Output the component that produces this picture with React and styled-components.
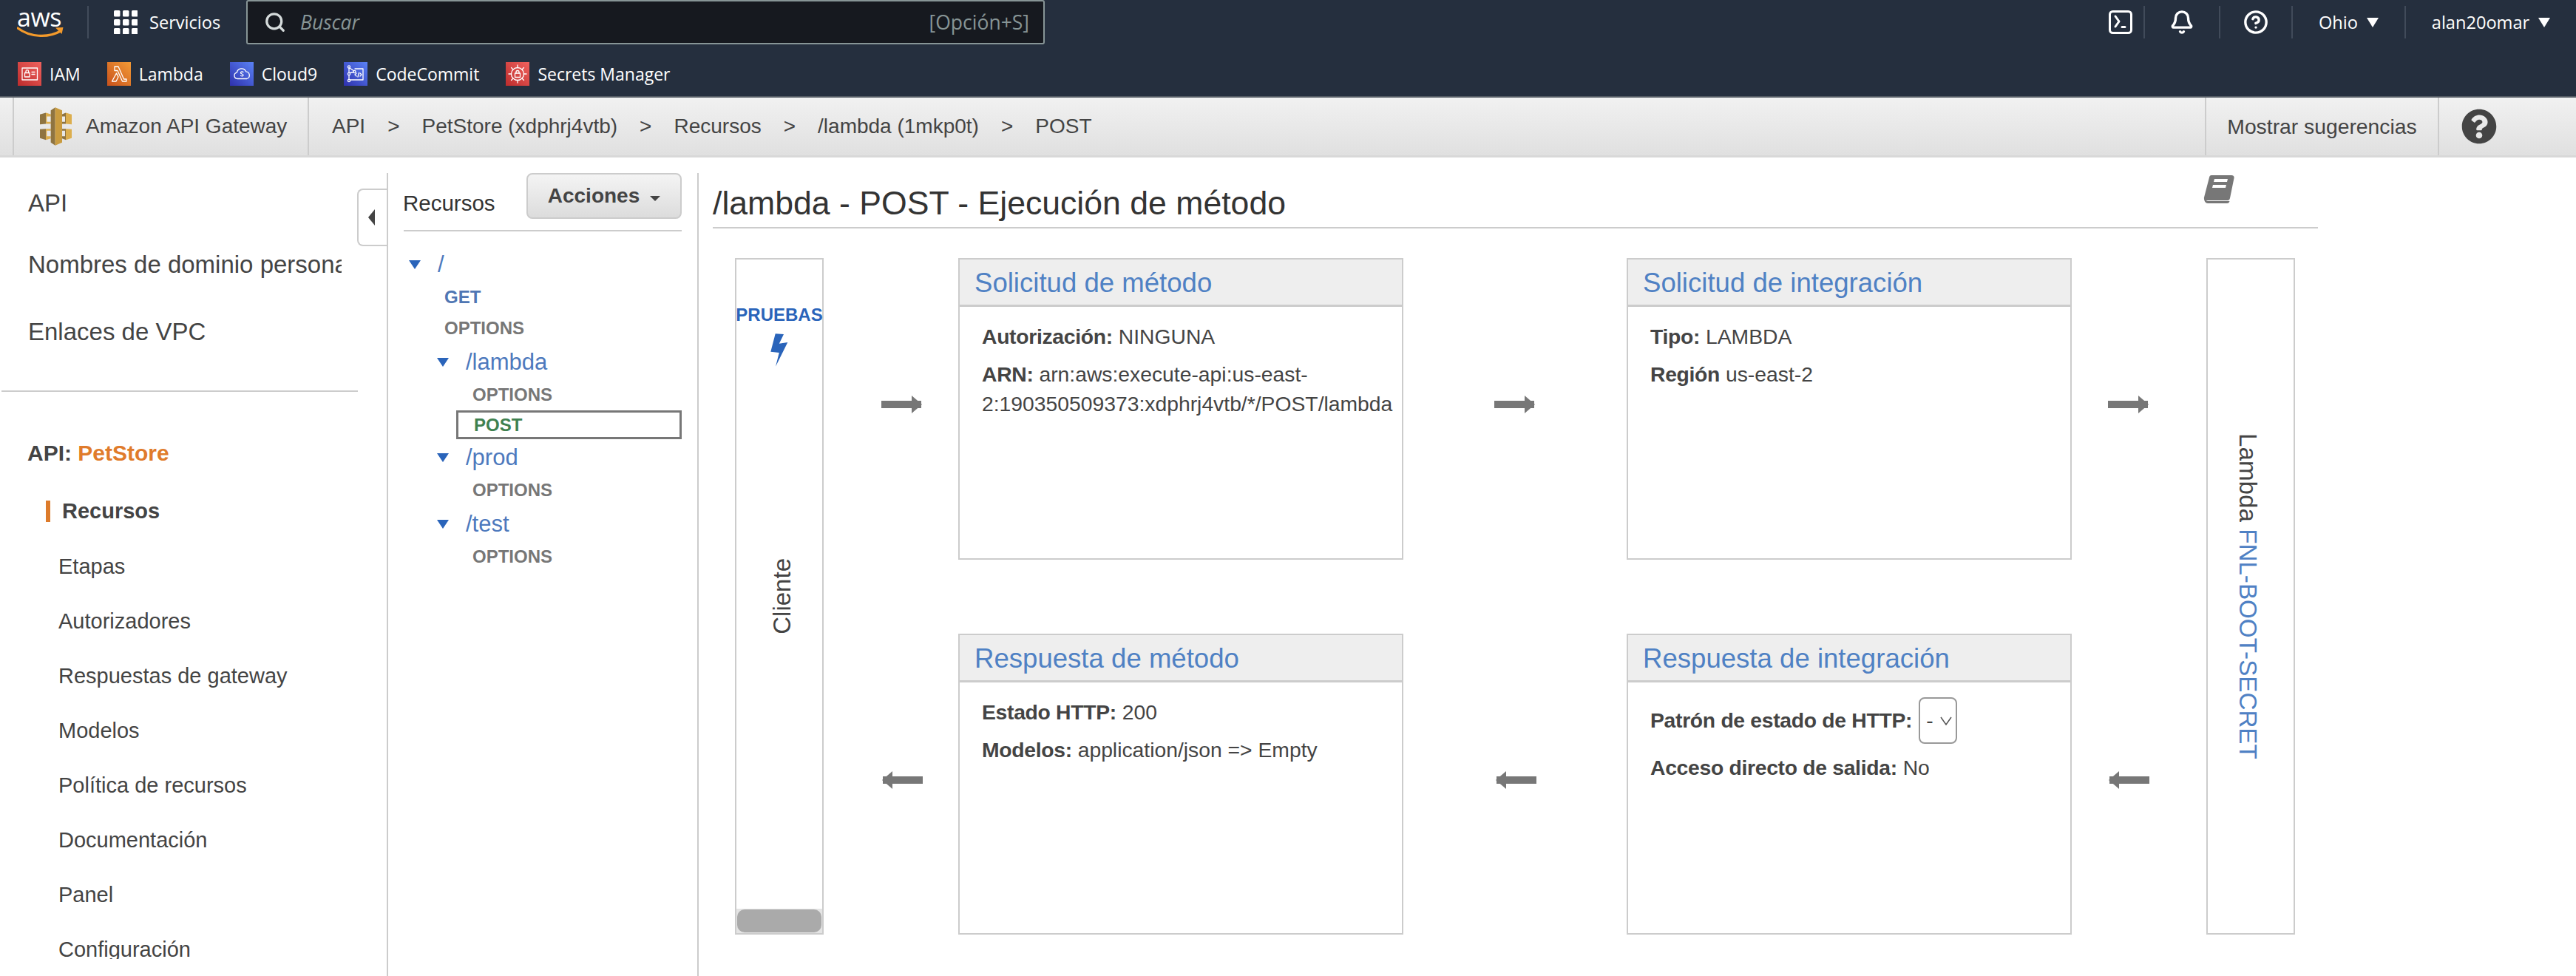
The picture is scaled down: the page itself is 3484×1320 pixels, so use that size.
import styled, { createGlobalStyle } from 'styled-components';
import { Search, Bell, CircleHelp } from 'lucide-react';
import { FaQuestionCircle } from 'react-icons/fa';

const GlobalStyle = createGlobalStyle`
  html, body {
    margin: 0;
    padding: 0;
    background: #fff;
  }
  * {
    box-sizing: border-box;
  }
`;

const shortcuts = [
  { name: 'IAM', from: '#bd2c2c', to: '#f0625e', icon: 'iam' },
  { name: 'Lambda', from: '#c8511b', to: '#f39b36', icon: 'lambda' },
  { name: 'Cloud9', from: '#2e30ad', to: '#5a82f5', icon: 'cloud' },
  { name: 'CodeCommit', from: '#2e30ad', to: '#5a82f5', icon: 'commit' },
  { name: 'Secrets Manager', from: '#bd2c2c', to: '#f0625e', icon: 'secrets' },
];

const crumbs = ['API', 'PetStore (xdphrj4vtb)', 'Recursos', '/lambda (1mkp0t)', 'POST'];

const sections = [
  'Etapas',
  'Autorizadores',
  'Respuestas de gateway',
  'Modelos',
  'Política de recursos',
  'Documentación',
  'Panel',
  'Configuración',
];

const ShortcutGlyph = ({ icon }) => {
  const line = { fill: 'none', stroke: '#fff', strokeWidth: 1.3, strokeLinejoin: 'round', strokeLinecap: 'round' };
  if (icon === 'iam') {
    return (
      <svg width='32' height='32' viewBox='0 0 32 32'>
        <rect x='6' y='8' width='20.5' height='16' {...line} />
        <rect x='9.5' y='14.5' width='6.5' height='5.5' {...line} />
        <path d='M11 14.5v-2a1.8 1.8 0 0 1 3.6 0v2M19 13.5h4M19 16.5h4' {...line} />
      </svg>
    );
  }
  if (icon === 'lambda') {
    return (
      <svg width='32' height='32' viewBox='0 0 32 32'>
        <path d='M10 6h5l7.5 17H26v3h-5.5L14 11.5h-4zM12.5 15l2.5 5-3 6H6.5z' {...line} />
      </svg>
    );
  }
  if (icon === 'cloud') {
    return (
      <svg width='32' height='32' viewBox='0 0 32 32'>
        <path d='M10 22.5a4.2 4.2 0 0 1-.7-8.3 6.5 6.5 0 0 1 12.4-1.4 5 5 0 0 1 1.3 9.7z' {...line} />
        <path d='M18 13.5c-2-1-3.5-.3-3.5 1 0 1.800 3.500 1.200 3.500 3 0 1.300-1.500 1.800-3.500 1' {...line} />
      </svg>
    );
  }
  if (icon === 'commit') {
    return (
      <svg width='32' height='32' viewBox='0 0 32 32'>
        <circle cx='7' cy='6.500' r='1.600' {...line} />
        <circle cx='7' cy='16' r='1.600' {...line} />
        <circle cx='7' cy='25' r='1.600' {...line} />
        <circle cx='14.500' cy='13' r='1.600' {...line} />
        <path d='M7 8v6.500M7 17.500v6M8.500 14.500l4.500-1M8 8l5.500 3.800M15 9h11v15H12l-3.500 0' {...line} />
        <path d='M17 15l-2 2 2 2M22 15l2 2-2 2M20.500 14.500l-1.500 5.500' {...line} />
      </svg>
    );
  }
  return (
    <svg width='32' height='32' viewBox='0 0 32 32'>
      <circle cx='16' cy='16' r='8.500' {...line} />
      <path d='M16 4v3.500M16 24.500V28M4 16h3.500M24.500 16H28M7.500 7.500 10 10M22 22l2.500 2.500M24.500 7.500 22 10M10 22l-2.500 2.500' {...line} />
      <rect x='12.500' y='15' width='7' height='5.500' {...line} />
      <path d='M14 15v-1.500a2 2 0 0 1 4 0V15' {...line} />
    </svg>
  );
};

const App = () => {
  return (
    <Page>
      <GlobalStyle />
      <TopBar>
        <NavRow>
          <LogoLink>
            <LogoText>aws</LogoText>
            <svg width='64' height='15' viewBox='0 0 64 15'>
              <path d='M1 2c16 12 40 14 58 4' fill='none' stroke='#f39a2b' strokeWidth='3.200' strokeLinecap='round' />
              <path d='M52 1.500 62.500 1 60.500 10z' fill='#f39a2b' />
            </svg>
          </LogoLink>
          <ServicesButton>
            <svg width='32' height='32' viewBox='0 0 32 32' fill='#fff'>
              {[0, 12, 24].map((y) =>
                [0, 12, 24].map((x) => <rect key={`${x}-${y}`} x={x} y={y} width='8.500' height='8.500' rx='1.500' />)
              )}
            </svg>
            Servicios
          </ServicesButton>
          <SearchBox>
            <Search size={30} strokeWidth={2.6} color='#d5dbdb' />
            <SearchHint>Buscar</SearchHint>
            <span>[Opción+S]</span>
          </SearchBox>
          <NavRight>
            <NavCell $width={65}>
              <svg width='32' height='32' viewBox='0 0 32 32' fill='none' stroke='#fff' strokeWidth='3' strokeLinecap='round' strokeLinejoin='round'>
                <rect x='1.500' y='1.500' width='29' height='29' rx='4' />
                <path d='M9 8l5 7-5 7M18 22.500h4' />
              </svg>
            </NavCell>
            <NavCell $width={102}>
              <Bell size={34} strokeWidth={2.4} color='#fff' />
            </NavCell>
            <NavCell $width={98}>
              <CircleHelp size={34} strokeWidth={2.4} color='#fff' />
            </NavCell>
            <NavCell $width={153}>
              Ohio <NavCaret />
            </NavCell>
            <NavCell $width={230}>
              alan20omar <NavCaret />
            </NavCell>
          </NavRight>
        </NavRow>
        <ShortcutRow>
          {shortcuts.map((item) => (
            <Shortcut key={item.name}>
              <ShortcutIcon $from={item.from} $to={item.to}>
                <ShortcutGlyph icon={item.icon} />
              </ShortcutIcon>
              {item.name}
            </Shortcut>
          ))}
        </ShortcutRow>
      </TopBar>

      <SubHeader>
        <BrandCell>
          <svg width='43' height='52' viewBox='68 33 129 155'>
            <path d='M68 62 92 55v45l-24 2z' fill='#8f7440' />
            <path d='M92 55l20 6v9H96v22h16v8H92z' fill='#dcae4e' />
            <path d='M68 122l24-2v45l-24-7z' fill='#8f7440' />
            <path d='M92 120h20v8H96v22h16v9l-20 6z' fill='#dcae4e' />
            <path d='M197 62l-24-7v45l24 2z' fill='#dcae4e' />
            <path d='M173 55l-15 6v9h12v22h-12v8h15z' fill='#8f7440' />
            <path d='M197 122l-24-2v45l24-7z' fill='#dcae4e' />
            <path d='M173 120h-15v8h12v22h-12v9l15 6z' fill='#8f7440' />
            <path d='M112 45l18-12v155l-18-12z' fill='#8f7440' />
            <path d='M130 33l28 12v131l-28 12z' fill='#c99b3f' />
          </svg>
          Amazon API Gateway
        </BrandCell>
        <Breadcrumbs>
          {crumbs.map((crumb, index) => (
            <Crumb key={crumb}>
              {index > 0 && <span>&gt;</span>}
              {crumb}
            </Crumb>
          ))}
        </Breadcrumbs>
        <HintCell>Mostrar sugerencias</HintCell>
        <HelpCell>
          <FaQuestionCircle size={48} color='#444' />
        </HelpCell>
      </SubHeader>

      <Body>
        <Sidebar>
          <SideScroll>
            <TopLink $after={43}>API</TopLink>
            <TopLink $after={51}>Nombres de dominio personalizados</TopLink>
            <TopLink $after={59}>Enlaces de VPC</TopLink>
            <SideDivider />
            <ApiName>
              API: <span>PetStore</span>
            </ApiName>
            <ActiveSection>Recursos</ActiveSection>
            {sections.map((name) => (
              <SideSection key={name}>{name}</SideSection>
            ))}
          </SideScroll>
          <CollapseTab>
            <CollapseArrow />
          </CollapseTab>
        </Sidebar>

        <ResourcesPanel>
          <ResourcesHeader>
            <ResourcesTitle>Recursos</ResourcesTitle>
            <ActionsButton>
              Acciones
              <ActionsCaret />
            </ActionsButton>
          </ResourcesHeader>
          <Tree>
            <FolderRow $depth={0}>
              <TreeArrow />/
            </FolderRow>
            <MethodRow $depth={0} $color='#4f76b3'>GET</MethodRow>
            <MethodRow $depth={0}>OPTIONS</MethodRow>
            <FolderRow $depth={1}>
              <TreeArrow />/lambda
            </FolderRow>
            <MethodRow $depth={1}>OPTIONS</MethodRow>
            <SelectedMethod>POST</SelectedMethod>
            <FolderRow $depth={1}>
              <TreeArrow />/prod
            </FolderRow>
            <MethodRow $depth={1}>OPTIONS</MethodRow>
            <FolderRow $depth={1}>
              <TreeArrow />/test
            </FolderRow>
            <MethodRow $depth={1}>OPTIONS</MethodRow>
          </Tree>
        </ResourcesPanel>

        <Main>
          <TitleRow>
            <PageTitle>/lambda - POST - Ejecución de método</PageTitle>
            <svg width='42' height='38' viewBox='0 0 42 38'>
              <path d='M11 0h27c2.500 0 4 1.500 3.500 4L36 31c-.5 2.500-2 3-4 3H4c-2.500 0-3.500-2-3-4L8 3c.3-1.800 1.300-3 3-3z' fill='#777' />
              <path d='M1 31c0 4 2 7 5 7h26c2 0 3-1 3.500-3H7c-3 0-4-1-3-4z' fill='#777' />
              <path d='M15 5h18l-1 4H14zM13 13h18l-1 4H12z' fill='#fff' />
            </svg>
          </TitleRow>

          <Diagram>
            <ClientColumn>
              <TestLabel>PRUEBAS</TestLabel>
              <svg width='24' height='45' viewBox='0 0 24 45'>
                <path d='M6.700.3 18 1l-6.200 12.700L23.300 12 7 44.700 11.800 26 .3 24.700z' fill='#2a64ba' />
              </svg>
              <ClientText>Cliente</ClientText>
              <ScrollTrack>
                <ScrollThumb />
              </ScrollTrack>
            </ClientColumn>

            <FlowArrow $col={2} $row={1} $offset={78}>
              <ArrowRight />
            </FlowArrow>
            <Card $col={3} $row={1}>
              <CardHeader>Solicitud de método</CardHeader>
              <CardBody>
                <Field>
                  <b>Autorización:</b> NINGUNA
                </Field>
                <Field>
                  <b>ARN:</b> arn:aws:execute-api:us-east-2:190350509373:xdphrj4vtb/*/POST/lambda
                </Field>
              </CardBody>
            </Card>
            <FlowArrow $col={4} $row={1} $offset={123}>
              <ArrowRight />
            </FlowArrow>
            <Card $col={5} $row={1}>
              <CardHeader>Solicitud de integración</CardHeader>
              <CardBody>
                <Field>
                  <b>Tipo:</b> LAMBDA
                </Field>
                <Field>
                  <b>Región</b> us-east-2
                </Field>
              </CardBody>
            </Card>
            <FlowArrow $col={6} $row={1} $offset={49}>
              <ArrowRight />
            </FlowArrow>

            <LambdaColumn>
              <VerticalLabel>
                Lambda <span>FNL-BOOT-SECRET</span>
              </VerticalLabel>
            </LambdaColumn>

            <FlowArrow $col={2} $row={3} $offset={80}>
              <ArrowLeft />
            </FlowArrow>
            <Card $col={3} $row={3}>
              <CardHeader>Respuesta de método</CardHeader>
              <CardBody>
                <Field>
                  <b>Estado HTTP:</b> 200
                </Field>
                <Field>
                  <b>Modelos:</b> application/json =&gt; Empty
                </Field>
              </CardBody>
            </Card>
            <FlowArrow $col={4} $row={3} $offset={126}>
              <ArrowLeft />
            </FlowArrow>
            <Card $col={5} $row={3}>
              <CardHeader>Respuesta de integración</CardHeader>
              <CardBody>
                <SelectField>
                  <b>Patrón de estado de HTTP:</b>
                  <StatusSelect>
                    -
                    <svg width='16' height='12' viewBox='0 0 16 12' fill='none' stroke='#555' strokeWidth='1.500'>
                      <path d='M1 1l7 10 7-10' />
                    </svg>
                  </StatusSelect>
                </SelectField>
                <Field>
                  <b>Acceso directo de salida:</b> No
                </Field>
              </CardBody>
            </Card>
            <FlowArrow $col={6} $row={3} $offset={51}>
              <ArrowLeft />
            </FlowArrow>
          </Diagram>
        </Main>
      </Body>
    </Page>
  );
};

const Page = styled.div`
  width: 3484px;
  height: 1320px;
  overflow: hidden;
  display: flex;
  flex-direction: column;
  background: #fff;
  color: #444;
  font-family: 'Liberation Sans', Arial, sans-serif;
  font-size: 28.3px;
`;

const TopBar = styled.header`
  height: 132px;
  flex: none;
  background: #252f3e;
  border-bottom: 2px solid #545b64;
  color: #fff;
  font-family: 'Open Sans', 'Noto Sans', sans-serif;
`;

const NavRow = styled.div`
  height: 60px;
  display: flex;
  align-items: center;
  font-size: 23.6px;
`;

const LogoLink = styled.div`
  width: 120px;
  height: 44px;
  padding-left: 23px;
  border-right: 2px solid #414b5a;
  display: flex;
  flex-direction: column;
  svg {
    margin-top: -2px;
  }
`;

const LogoText = styled.span`
  font-size: 34px;
  line-height: 30px;
  letter-spacing: -0.5px;
`;

const ServicesButton = styled.div`
  display: flex;
  align-items: center;
  gap: 16px;
  width: 213px;
  padding-left: 34px;
`;

const SearchBox = styled.div`
  width: 1080px;
  height: 60px;
  background: #16191f;
  border: 2px solid #879596;
  border-radius: 3px;
  display: flex;
  align-items: center;
  padding: 0 19px 0 22px;
  gap: 19px;
  font-size: 26.5px;
  color: #879596;
`;

const SearchHint = styled.span`
  font-style: italic;
  flex: 1;
`;

const NavRight = styled.div`
  margin-left: auto;
  height: 44px;
  display: flex;
  align-items: center;
`;

const NavCell = styled.div`
  width: ${(props) => props.$width}px;
  height: 44px;
  display: flex;
  align-items: center;
  justify-content: center;
  gap: 12px;
  &:not(:last-child) {
    border-right: 2px solid #414b5a;
  }
`;

const NavCaret = styled.i`
  border-left: 8px solid transparent;
  border-right: 8px solid transparent;
  border-top: 13px solid #fff;
`;

const ShortcutRow = styled.div`
  height: 70px;
  padding: 10px 0 0 24px;
  display: flex;
  align-items: center;
  gap: 36px;
  font-size: 23px;
`;

const Shortcut = styled.div`
  display: flex;
  align-items: center;
  gap: 11px;
`;

const ShortcutIcon = styled.span`
  width: 32px;
  height: 32px;
  display: block;
  background: linear-gradient(45deg, ${(props) => props.$from}, ${(props) => props.$to});
`;

const SubHeader = styled.div`
  height: 81px;
  flex: none;
  display: flex;
  align-items: stretch;
  padding-left: 17px;
  background: linear-gradient(#f1f1f1, #e0e0e0);
  border-bottom: 3px solid #d8d8d8;
`;

const BrandCell = styled.div`
  width: 401px;
  padding-left: 35px;
  display: flex;
  align-items: center;
  gap: 19px;
  font-size: 28px;
  border-left: 2px solid #ccc;
  border-right: 2px solid #ccc;
`;

const Breadcrumbs = styled.nav`
  display: flex;
  align-items: center;
  gap: 30px;
  padding-left: 31px;
  font-size: 28px;
`;

const Crumb = styled.span`
  display: flex;
  align-items: center;
  gap: 30px;
`;

const HintCell = styled.div`
  margin-left: auto;
  width: 317px;
  display: flex;
  align-items: center;
  justify-content: center;
  border-left: 2px solid #ccc;
  border-right: 2px solid #ccc;
`;

const HelpCell = styled.div`
  width: 185px;
  padding-left: 30px;
  display: flex;
  align-items: center;
`;

const Body = styled.div`
  flex: 1;
  min-height: 0;
  display: flex;
  align-items: stretch;
`;

const Sidebar = styled.aside`
  position: relative;
  width: 523px;
  flex: none;
`;

const SideScroll = styled.div`
  width: 482px;
  height: 1084px;
  margin-left: 2px;
  padding-top: 42px;
  overflow: hidden;
  font-size: 29px;
`;

const TopLink = styled.div`
  width: 460px;
  height: 40px;
  margin-bottom: ${(props) => props.$after}px;
  padding-left: 36px;
  font-size: 33px;
  line-height: 40px;
  white-space: nowrap;
  overflow: hidden;
`;

const SideDivider = styled.div`
  height: 2px;
  background: #ccc;
`;

const ApiName = styled.div`
  height: 40px;
  margin: 63px 0 44px;
  padding-left: 35px;
  font-size: 30px;
  line-height: 40px;
  font-weight: 700;
  span {
    color: #e07b2b;
  }
`;

const ActiveSection = styled.div`
  height: 29px;
  margin: 0 0 23px 60px;
  padding-left: 16px;
  border-left: 6px solid #dd7b2b;
  font-weight: 700;
  line-height: 29px;
`;

const SideSection = styled.div`
  height: 74px;
  padding-left: 77px;
  line-height: 74px;
  white-space: nowrap;
`;

const CollapseTab = styled.div`
  position: absolute;
  top: 42px;
  right: 0;
  width: 40px;
  height: 78px;
  background: #fff;
  border: 2px solid #ccc;
  border-right: 0;
  border-radius: 8px 0 0 8px;
  display: flex;
  align-items: center;
  padding-left: 13px;
`;

const CollapseArrow = styled.i`
  border-top: 11px solid transparent;
  border-bottom: 11px solid transparent;
  border-right: 9px solid #444;
`;

const ResourcesPanel = styled.section`
  width: 422px;
  flex: none;
  margin-top: 21px;
  padding: 0 21px;
  border-left: 2px solid #ccc;
  border-right: 2px solid #ccc;
`;

const ResourcesHeader = styled.div`
  height: 79px;
  display: flex;
  justify-content: space-between;
  border-bottom: 2px solid #ccc;
`;

const ResourcesTitle = styled.span`
  margin-left: -1px;
  font-size: 29.5px;
  line-height: 82px;
  color: #333;
`;

const ActionsButton = styled.div`
  width: 210px;
  height: 62px;
  border: 2px solid #ccc;
  border-radius: 8px;
  background: linear-gradient(#f4f4f4, #dcdcdc);
  display: flex;
  align-items: center;
  justify-content: center;
  gap: 14px;
  font-weight: 700;
  font-size: 28px;
`;

const ActionsCaret = styled.i`
  border-left: 7px solid transparent;
  border-right: 7px solid transparent;
  border-top: 7px solid #444;
  margin-top: 6px;
`;

const Tree = styled.div`
  padding-top: 20px;
`;

const FolderRow = styled.div`
  height: 46px;
  margin-top: 2px;
  padding-left: ${(props) => 7 + props.$depth * 38}px;
  display: flex;
  align-items: center;
  gap: 23px;
  font-size: 31px;
  color: #4d79bd;
`;

const TreeArrow = styled.i`
  border-left: 8px solid transparent;
  border-right: 8px solid transparent;
  border-top: 12px solid #2a64ba;
`;

const MethodRow = styled.div`
  height: 42px;
  padding-left: ${(props) => 55 + props.$depth * 38}px;
  line-height: 42px;
  font-size: 24px;
  font-weight: 700;
  color: ${(props) => props.$color || '#777'};
`;

const SelectedMethod = styled.div`
  height: 39px;
  margin: 0 0 2px 71px;
  padding-left: 21px;
  border: 3px solid #777;
  font-size: 24px;
  font-weight: 700;
  line-height: 33px;
  color: #3f8150;
`;

const Main = styled.main`
  flex: 1;
  min-width: 0;
`;

const TitleRow = styled.div`
  width: 2171px;
  height: 96px;
  margin-left: 19px;
  padding: 24px 113px 0 0;
  border-bottom: 2px solid #ccc;
  display: flex;
  justify-content: space-between;
  align-items: flex-start;
`;

const PageTitle = styled.h1`
  margin: 8px 0 0;
  font-size: 44.6px;
  font-weight: 400;
  line-height: 60px;
  color: #333;
`;

const Diagram = styled.div`
  margin: 40px 0 0 49px;
  display: grid;
  grid-template-columns: 120px 182px 602px 302px 602px 182px 120px;
  grid-template-rows: 408px 100px 407px;
`;

const ClientColumn = styled.div`
  grid-column: 1;
  grid-row: 1 / 4;
  border: 2px solid #ccc;
  display: flex;
  flex-direction: column;
  align-items: center;
`;

const TestLabel = styled.div`
  margin-top: 60px;
  margin-bottom: 10px;
  font-size: 24px;
  line-height: 30px;
  font-weight: 700;
  color: #2a64ba;
`;

const ClientText = styled.div`
  margin: 259px 0 0 8px;
  writing-mode: vertical-rl;
  transform: rotate(180deg);
  font-size: 33px;
  line-height: 40px;
`;

const ScrollTrack = styled.div`
  margin-top: auto;
  width: 100%;
  height: 33px;
  padding: 1px;
  background: #e4e4e4;
`;

const ScrollThumb = styled.div`
  height: 100%;
  border-radius: 10px;
  background: #aaa;
`;

const FlowArrow = styled.div`
  grid-column: ${(props) => props.$col};
  grid-row: ${(props) => props.$row};
  display: flex;
  align-items: center;
  padding-bottom: 12px;
  padding-left: ${(props) => props.$offset}px;
`;

const ArrowBody = styled.span`
  display: block;
  position: relative;
  width: 54px;
  height: 10px;
  background: #777;
  &::after {
    content: '';
    position: absolute;
    top: -7px;
    border-top: 12px solid transparent;
    border-bottom: 12px solid transparent;
  }
`;

const ArrowRight = styled(ArrowBody)`
  &::after {
    right: -1px;
    border-left: 14px solid #777;
  }
`;

const ArrowLeft = styled(ArrowBody)`
  &::after {
    left: -1px;
    border-right: 14px solid #777;
  }
`;

const Card = styled.article`
  grid-column: ${(props) => props.$col};
  grid-row: ${(props) => props.$row};
  border: 2px solid #ccc;
  display: flex;
  flex-direction: column;
`;

const CardHeader = styled.h2`
  flex: none;
  height: 64px;
  margin: 0;
  padding: 3px 0 0 20px;
  background: #eee;
  border-bottom: 3px solid #ccc;
  font-size: 36.6px;
  font-weight: 400;
  line-height: 58px;
  color: #4f81c4;
`;

const CardBody = styled.div`
  padding: 20px 0 0 30px;
`;

const Field = styled.p`
  margin: 0 0 11px;
  line-height: 40px;
  b {
    font-weight: 700;
    letter-spacing: -0.3px;
  }
`;

const SelectField = styled.div`
  height: 63px;
  margin-bottom: 12px;
  display: flex;
  align-items: center;
  gap: 9px;
  b {
    font-weight: 700;
    letter-spacing: -0.3px;
  }
`;

const StatusSelect = styled.div`
  width: 52px;
  height: 63px;
  padding: 0 5px 0 8px;
  border: 2px solid #999;
  border-radius: 8px;
  display: flex;
  align-items: center;
  justify-content: space-between;
`;

const LambdaColumn = styled.div`
  grid-column: 7;
  grid-row: 1 / 4;
  border: 2px solid #ccc;
  display: flex;
  align-items: center;
  justify-content: center;
`;

const VerticalLabel = styled.div`
  margin-right: 8px;
  writing-mode: vertical-rl;
  font-size: 33.2px;
  line-height: 40px;
  white-space: nowrap;
  span {
    color: #4f81c4;
  }
`;

export default App;
